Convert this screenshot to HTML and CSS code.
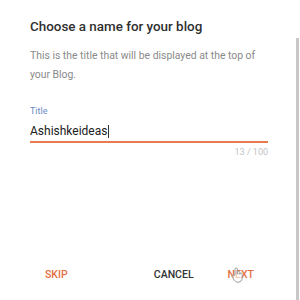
FILE: index.html
```html
<!DOCTYPE html>
<html lang="en">
<head>
  <meta charset="UTF-8" />
  <title>Choose a name for your blog</title>
  <link rel="stylesheet" href="styles.css">
</head>
<body>
  <div class="dialog">
    <h2 class="dialog-title">Choose a name for your blog</h2>
    <p class="dialog-desc">This is the title that will be displayed at the top of your Blog.</p>

    <div class="field">
      <label class="field-label">Title</label>
      <div class="field-input">Ashishkeideas<span class="caret"></span></div>
      <div class="field-count">13 / 100</div>
    </div>

    <div class="actions">
      <button class="btn btn-accent">Skip</button>
      <div class="actions-right">
        <button class="btn">Cancel</button>
        <button class="btn btn-accent next">Next
          <svg class="pointer" width="14" height="16" viewBox="0 0 14 16">
            <path d="M4 8 V2.2 a1.2 1.2 0 0 1 2.4 0 V7 V5.6 a1.2 1.2 0 0 1 2.4 0 V7.2 a1.2 1.2 0 0 1 2.4 0 V11 c0 2.5 -1.8 4.2 -4.2 4.2 c-2 0 -3 -1 -4 -2.4 L1.2 9.6 a1.1 1.1 0 0 1 1.8 -1.2 Z" fill="rgba(255,255,255,0.6)" stroke="#9a9a9a" stroke-width="1"/>
          </svg>
        </button>
      </div>
    </div>
  </div>
  <div class="scrollbar"></div>
</body>
</html>
```

FILE: styles.css
```css
body {
  margin: 0;
  width: 300px;
  height: 300px;
  overflow: hidden;
  background: #fff;
  font-family: Roboto, 'Noto Sans', sans-serif;
  position: relative;
}
.dialog {
  height: 300px;
  box-sizing: border-box;
  padding: 18px 32px 0 30px;
  display: flex;
  flex-direction: column;
}
.dialog-title {
  margin: 0;
  font-size: 13.4px;
  font-weight: 500;
  color: #303030;
  line-height: 18px;
}
.dialog-desc {
  margin: 10px 0 0;
  font-size: 10.4px;
  line-height: 19px;
  color: #8a8a8a;
}
.field {
  margin-top: 21px;
  display: flex;
  flex-direction: column;
}
.field-label {
  font-size: 9px;
  color: #6a8cc8;
  line-height: 12px;
}
.field-input {
  margin-top: 6px;
  font-size: 12px;
  line-height: 16px;
  color: #202020;
  padding-bottom: 2px;
  border-bottom: 2px solid #e77b4e;
  display: flex;
  align-items: center;
}
.caret {
  display: inline-block;
  width: 1px;
  height: 13px;
  background: #333;
  margin-left: 1px;
}
.field-count {
  margin-top: 4px;
  align-self: flex-end;
  font-size: 9px;
  color: #c2c2c2;
}
.actions {
  margin-top: auto;
  margin-bottom: 13px;
  display: flex;
  justify-content: space-between;
  align-items: center;
}
.actions-right {
  display: flex;
  gap: 4px;
}
.btn {
  background: none;
  border: none;
  font-family: inherit;
  font-size: 10.5px;
  font-weight: 500;
  text-transform: uppercase;
  color: #333;
  padding: 6px 15px;
  cursor: pointer;
}
.btn-accent {
  color: #e4703f;
}
.next {
  position: relative;
  padding-right: 14px;
}
.pointer {
  position: absolute;
  left: 18px;
  top: 5px;
}
.scrollbar {
  position: absolute;
  right: 1px;
  top: 38px;
  bottom: 0;
  width: 3px;
  background: #c8c8c8;
}
```
